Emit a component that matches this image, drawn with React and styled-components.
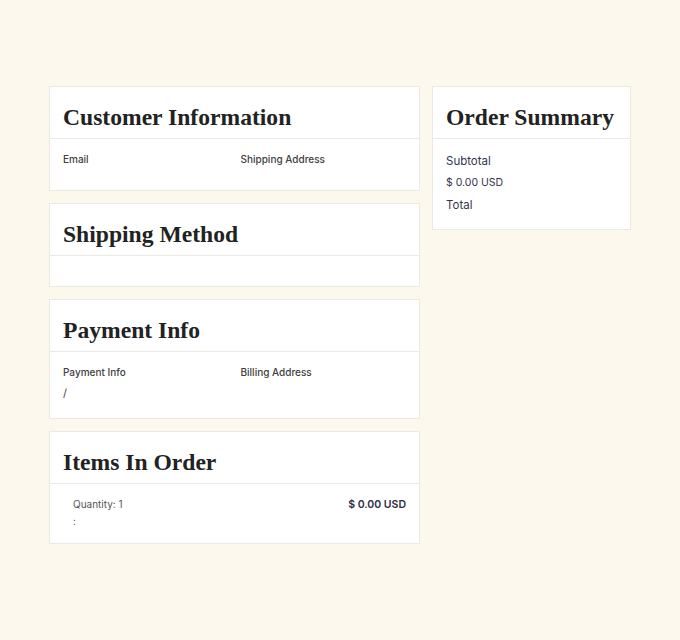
import React from "react";
import styled, { createGlobalStyle } from "styled-components";

const Global = createGlobalStyle`
  html, body {
    margin: 0;
    padding: 0;
    background: #fcf8ee;
  }
  body {
    font-family: Inter, "Noto Sans", sans-serif;
    color: #333;
  }
`;

const Page = styled.div`
  width: 680px;
  height: 640px;
  box-sizing: border-box;
  padding: 86px 49px 0 49px;
  display: flex;
  gap: 12px;
  align-items: flex-start;
`;

const Column = styled.div`
  display: flex;
  flex-direction: column;
  gap: 12px;
  width: ${p => p.width}px;
`;

const Card = styled.div`
  background: #fff;
  border: 1px solid #ece9e2;
  display: flex;
  flex-direction: column;
`;

const Header = styled.div`
  padding: 15px 13px 0 13px;
  height: 52px;
  box-sizing: border-box;
  border-bottom: 1px solid #ece9e2;
`;

const Title = styled.h2`
  margin: 0;
  font-family: "Liberation Serif", "DejaVu Serif", serif;
  font-weight: 700;
  font-size: 23.6px;
  line-height: 30px;
  color: #222;
  white-space: nowrap;
`;

const Body = styled.div`
  padding: ${p => p.pad || "14px 13px 17px 13px"};
`;

const Grid = styled.div`
  display: grid;
  grid-template-columns: 1fr 1fr;
  column-gap: 12px;
`;

const Field = styled.div`
  display: flex;
  flex-direction: column;
  gap: 7px;
`;

const Label = styled.div`
  font-size: 10px;
  font-weight: 500;
  line-height: 13px;
  color: #404040;
`;

const Value = styled.div`
  font-size: 11px;
  line-height: 15px;
  color: #444;
`;

const Item = styled.div`
  display: flex;
  justify-content: space-between;
  padding: 0 0 0 10px;
`;

const ItemInfo = styled.div`
  display: flex;
  flex-direction: column;
  gap: 4px;
  font-size: 10px;
  line-height: 13px;
  color: #555;
`;

const Price = styled.div`
  font-size: 10.5px;
  font-weight: 600;
  line-height: 13px;
  color: #2f2f45;
`;

const Summary = styled.div`
  display: flex;
  flex-direction: column;
  gap: 6px;
`;

const SummaryLine = styled.div`
  font-size: ${p => (p.small ? "10.5px" : "11.5px")};
  line-height: 16px;
  color: #33344f;
`;

export default function App() {
  return (
    <>
      <Global />
      <Page>
        <Column width={371}>
          <Card>
            <Header>
              <Title>Customer Information</Title>
            </Header>
            <Body>
              <Grid>
                <Field>
                  <Label>Email</Label>
                  <Value />
                </Field>
                <Field>
                  <Label>Shipping Address</Label>
                  <Value />
                </Field>
              </Grid>
            </Body>
          </Card>
          <Card>
            <Header>
              <Title>Shipping Method</Title>
            </Header>
            <Body pad="15px 13px" />
          </Card>
          <Card>
            <Header>
              <Title>Payment Info</Title>
            </Header>
            <Body>
              <Grid>
                <Field>
                  <Label>Payment Info</Label>
                  <Value>/</Value>
                </Field>
                <Field>
                  <Label>Billing Address</Label>
                  <Value />
                </Field>
              </Grid>
            </Body>
          </Card>
          <Card>
            <Header>
              <Title>Items In Order</Title>
            </Header>
            <Body pad="14px 13px 15px 13px">
              <Item>
                <ItemInfo>
                  <span>Quantity: 1</span>
                  <span>:</span>
                </ItemInfo>
                <Price>$ 0.00 USD</Price>
              </Item>
            </Body>
          </Card>
        </Column>
        <Column width={199}>
          <Card>
            <Header>
              <Title>Order Summary</Title>
            </Header>
            <Body pad="14px 13px 16px 13px">
              <Summary>
                <SummaryLine>Subtotal</SummaryLine>
                <SummaryLine small>$ 0.00 USD</SummaryLine>
                <SummaryLine>Total</SummaryLine>
              </Summary>
            </Body>
          </Card>
        </Column>
      </Page>
    </>
  );
}
